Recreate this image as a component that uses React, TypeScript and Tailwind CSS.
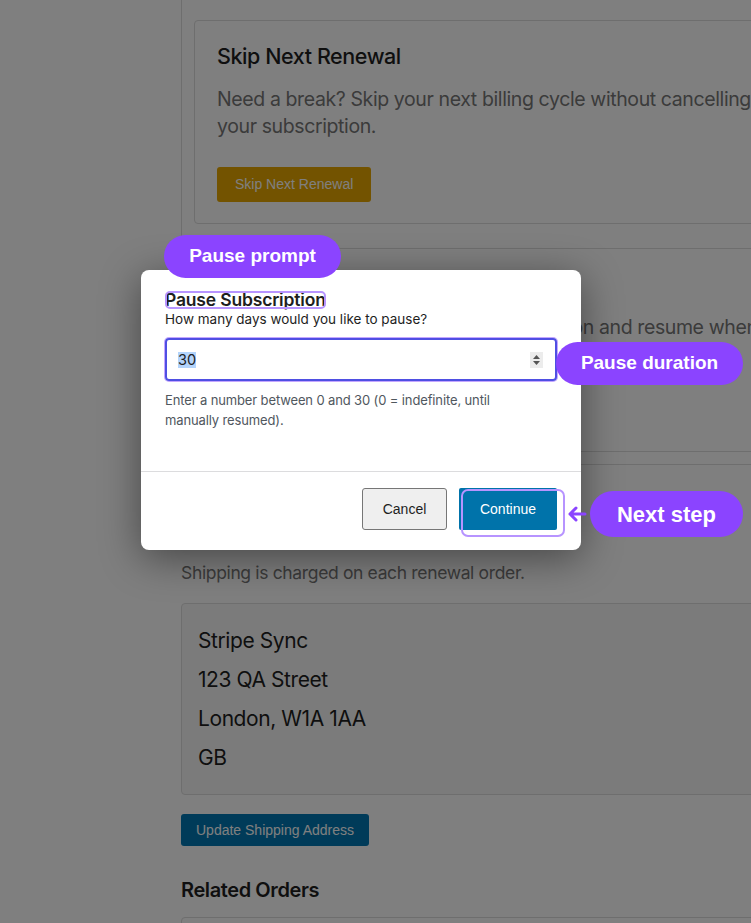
import React from 'react';

const arial = "font-['Liberation_Sans',Arial,sans-serif]";

// Purple callout pill laid over the page
const Callout: React.FC<{ label: string; className: string }> = ({ label, className }) => (
  <div
    className={`absolute flex items-center justify-center rounded-full bg-[#8b44ff] font-bold text-white ${arial} ${className}`}
  >
    {label}
  </div>
);

const ActionCard: React.FC<{
  title: string;
  text: string;
  button: string;
  buttonClass: string;
}> = ({ title, text, button, buttonClass }) => (
  <div className="rounded-[4px] border border-[#dcdcdc] px-[22px] pt-[22px] pb-[21px]">
    <h3 className="text-[21.5px] font-medium leading-[26px] tracking-[-0.02em] text-[#1e1e1e]">{title}</h3>
    <p className="mt-[17px] text-[19.5px] leading-[27px] tracking-[-0.02em] text-[#767676]">{text}</p>
    <button
      className={`mt-[27px] h-[35px] rounded-[3px] px-[18px] text-[14px] text-white ${arial} ${buttonClass}`}
    >
      {button}
    </button>
  </div>
);

const PauseModal: React.FC = () => (
  <div className="absolute left-[141px] top-[270px] flex h-[280px] w-[440px] flex-col rounded-[8px] bg-white shadow-[0_8px_40px_rgba(0,0,0,0.45)]">
    <div className="h-[201px] px-6 pt-[20px]">
      <div className="relative w-fit">
        <h2 className="text-[17.5px] font-semibold leading-[20px] tracking-[-0.01em] text-[#1e1e1e]">
          Pause Subscription
        </h2>
        <span className="absolute left-0 top-[1px] h-[18px] w-[161px] rounded-[5px] border-2 border-[#b794ff]" />
      </div>
      <p className="text-[13.5px] leading-[18px] text-[#1e1e1e]">How many days would you like to pause?</p>
      <div className="mt-[10px] flex h-[43px] items-center justify-between rounded-[4px] border-2 border-[#4f4fe3] pl-[11px] pr-[12px] shadow-[0_0_0_1px_#c4a6ff]">
        <span className="bg-[#b3d4fc] text-[14.5px] leading-[16px] text-[#1e1e1e]">30</span>
        <span className="flex h-[16px] w-[13px] flex-col items-center justify-center gap-[2px] bg-[#ececec]">
          <svg width="7" height="4" viewBox="0 0 7 4">
            <path d="M0 4 L3.5 0 L7 4 Z" fill="#555" />
          </svg>
          <svg width="7" height="4" viewBox="0 0 7 4">
            <path d="M0 0 L3.5 4 L7 0 Z" fill="#555" />
          </svg>
        </span>
      </div>
      <p className="mt-[9px] max-w-[372px] text-[13px] leading-[20px] tracking-[-0.01em] text-[#50575e]">
        Enter a number between 0 and 30 (0 = indefinite, until manually resumed).
      </p>
    </div>
    <div className={`flex flex-1 justify-end gap-[12px] border-t border-[#dcdcde] px-6 pt-[16px] ${arial}`}>
      <button className="h-[42px] w-[85px] rounded-[3px] border border-[#767676] bg-[#efefef] text-[14px] text-[#1e1e1e]">
        Cancel
      </button>
      <button className="h-[42px] w-[98px] rounded-[2px] bg-[#0073aa] text-[14px] text-white">Continue</button>
    </div>
  </div>
);

export default function App() {
  return (
    <div className="relative h-[923px] w-[751px] overflow-hidden bg-white font-['Inter',sans-serif]">
      <div className="pl-[181px]">
        <div className="w-[615px]">
          {/* subscription actions */}
          <div className="-mt-[120px] flex flex-col gap-[24px] rounded-[4px] border border-[#dcdcdc] p-[12px]">
            <div className="h-[103px] rounded-[4px] border border-[#dcdcdc]" />
            <ActionCard
              title="Skip Next Renewal"
              text="Need a break? Skip your next billing cycle without cancelling your subscription."
              button="Skip Next Renewal"
              buttonClass="bg-[#e6a600]"
            />
            <ActionCard
              title="Pause Subscription"
              text="Going on holiday? Pause your subscription and resume when you're ready."
              button="Pause Subscription"
              buttonClass="bg-[#0073aa]"
            />
          </div>

          {/* shipping */}
          <h3 className="mt-[50px] text-[20px] font-semibold leading-[28px] tracking-[-0.02em] text-[#1e1e1e]">
            Shipping Address
          </h3>
          <p className="mt-[17px] text-[17.5px] leading-[26px] tracking-[-0.02em] text-[#777]">
            Shipping is charged on each renewal order.
          </p>
          <div className="mt-[17px] rounded-[4px] border border-[#dcdcdc] bg-[#f7f7f7] px-[16px] py-[17px] text-[21px] leading-[39px] tracking-[-0.02em] text-[#1e1e1e]">
            <div>Stripe Sync</div>
            <div>123 QA Street</div>
            <div>London, W1A 1AA</div>
            <div>GB</div>
          </div>
          <button className={`mt-[19px] h-[32px] rounded-[3px] bg-[#0077b3] px-[15px] text-[14px] text-white ${arial}`}>
            Update Shipping Address
          </button>
          <h3 className="mt-[30px] text-[20px] font-semibold leading-[28px] tracking-[-0.02em] text-[#1e1e1e]">
            Related Orders
          </h3>
          <div className="mt-[13px] h-[120px] rounded-[4px] border border-[#dcdcdc]" />
        </div>
      </div>

      <div className="absolute inset-0 bg-black/50" />

      <PauseModal />

      <Callout label="Pause prompt" className="left-[164px] top-[235px] h-[43px] w-[177px] text-[19px]" />
      <Callout label="Pause duration" className="left-[556px] top-[342px] h-[43px] w-[187px] text-[19px]" />
      <Callout label="Next step" className="left-[590px] top-[491px] h-[46px] w-[153px] text-[22px]" />

      <div className="absolute left-[461px] top-[489px] h-[48px] w-[104px] rounded-[7px] border-2 border-[#b794ff]" />
      <svg className="absolute left-[567px] top-[506px]" width="20" height="16" viewBox="0 0 20 16">
        <path d="M18 8 H3 M9 2 L3 8 L9 14" fill="none" stroke="#8b44ff" strokeWidth="3" strokeLinecap="round" strokeLinejoin="round" />
      </svg>
    </div>
  );
}
